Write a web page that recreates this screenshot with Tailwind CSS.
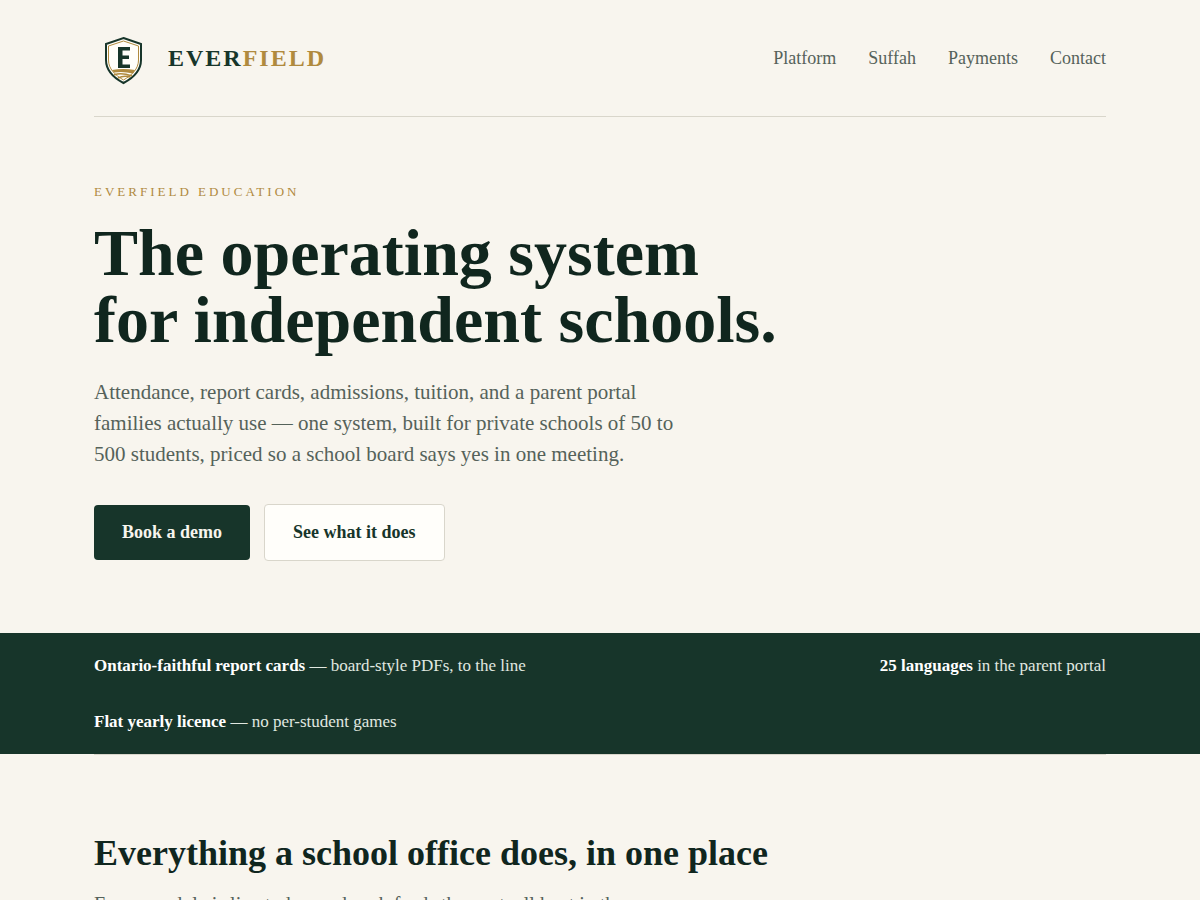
<!DOCTYPE html>
<html lang="en">
<head>
  <meta charset="UTF-8">
  <meta name="viewport" content="width=device-width, initial-scale=1.0">
  <title>Everfield Education</title>
  <script src="https://cdn.jsdelivr.net/npm/@tailwindcss/browser@4"></script>
</head>
<body class="bg-[#f8f5ee] text-[#10261e] font-['Liberation_Serif',serif] overflow-x-hidden">

  <div class="max-w-[1060px] mx-auto px-6">
    <header class="flex items-center justify-between py-7 border-b border-[#d9d6cb]">
      <a href="#" class="flex items-center gap-3.5">
        <svg class="size-[60px]" viewBox="0 0 60 60" fill="none" aria-hidden="true">
          <path d="M29.500 10 L47 16 V32 C47 43 39 50 29.500 55 C20 50 12 43 12 32 V16 Z" fill="#fffefa" stroke="#17352a" stroke-width="2"/>
          <path d="M29.500 13 L44.500 18 V32 C44.500 41 38 47 29.500 52 C21 47 14.500 41 14.500 32 V18 Z" stroke="#b08a3e" stroke-width="1"/>
          <path d="M24 19 H36 V22.500 H28.500 V27.500 H35 V31 H28.500 V36.500 H36 V40 H24 Z" fill="#17352a"/>
          <path d="M18 42 Q29 40 41 42 L39 45.500 Q29 43 20 44.500 Z" fill="#b08a3e"/>
          <path d="M20 47 Q27 44 38 48 M24 50 Q30 47 36 49" stroke="#b08a3e" stroke-width="1.500"/>
        </svg>
        <span class="text-2xl font-bold tracking-[2px] text-[#17352a]">EVER<span class="text-[#b08a3e]">FIELD</span></span>
      </a>
      <nav class="flex gap-8 text-lg text-[#55625a]">
        <a href="#platform">Platform</a>
        <a href="#suffah">Suffah</a>
        <a href="#payments">Payments</a>
        <a href="#contact">Contact</a>
      </nav>
    </header>

    <section class="pt-16 pb-18">
      <p class="text-[13px] leading-[22px] tracking-[3px] text-[#b08a3e]">EVERFIELD EDUCATION</p>
      <h1 class="mt-4 text-[66px] leading-[67px] font-bold">The operating system<br>for independent schools.</h1>
      <p class="mt-6 max-w-[600px] text-[21px] leading-[31px] text-[#55625a]">Attendance, report cards, admissions, tuition, and a parent portal families actually use — one system, built for private schools of 50 to 500 students, priced so a school board says yes in one meeting.</p>
      <div class="mt-[34px] flex items-center gap-3.5 text-lg leading-[27px] font-bold">
        <a href="#contact" class="px-7 py-3.5 rounded bg-[#17352a] text-[#f8f5ee]">Book a demo</a>
        <a href="#platform" class="px-7 py-3.5 rounded border border-[#d9d6cb] bg-[#fffefa] text-[#17352a]">See what it does</a>
      </div>
    </section>
  </div>

  <div class="bg-[#17352a] text-[#e0e8e0]">
    <div class="max-w-[1060px] mx-auto px-6 py-5 flex flex-wrap justify-between gap-x-8 gap-y-[31px] text-[17px] leading-[25px]">
      <span><strong class="text-white">Ontario-faithful report cards</strong> — board-style PDFs, to the line</span>
      <span><strong class="text-white">25 languages</strong> in the parent portal</span>
      <span><strong class="text-white">Flat yearly licence</strong> — no per-student games</span>
    </div>
  </div>

  <div class="max-w-[1060px] mx-auto px-6">
    <section id="platform" class="border-t border-[#d9d6cb] pt-[78px] pb-20">
      <h2 class="text-[36px] leading-10 font-bold">Everything a school office does, in one place</h2>
      <p class="mt-4 max-w-[600px] text-xl leading-[30px] text-[#55625a]">Every module is live today, and each feeds the next, all kept in the same system your office already has open.</p>
    </section>
  </div>

</body>
</html>
